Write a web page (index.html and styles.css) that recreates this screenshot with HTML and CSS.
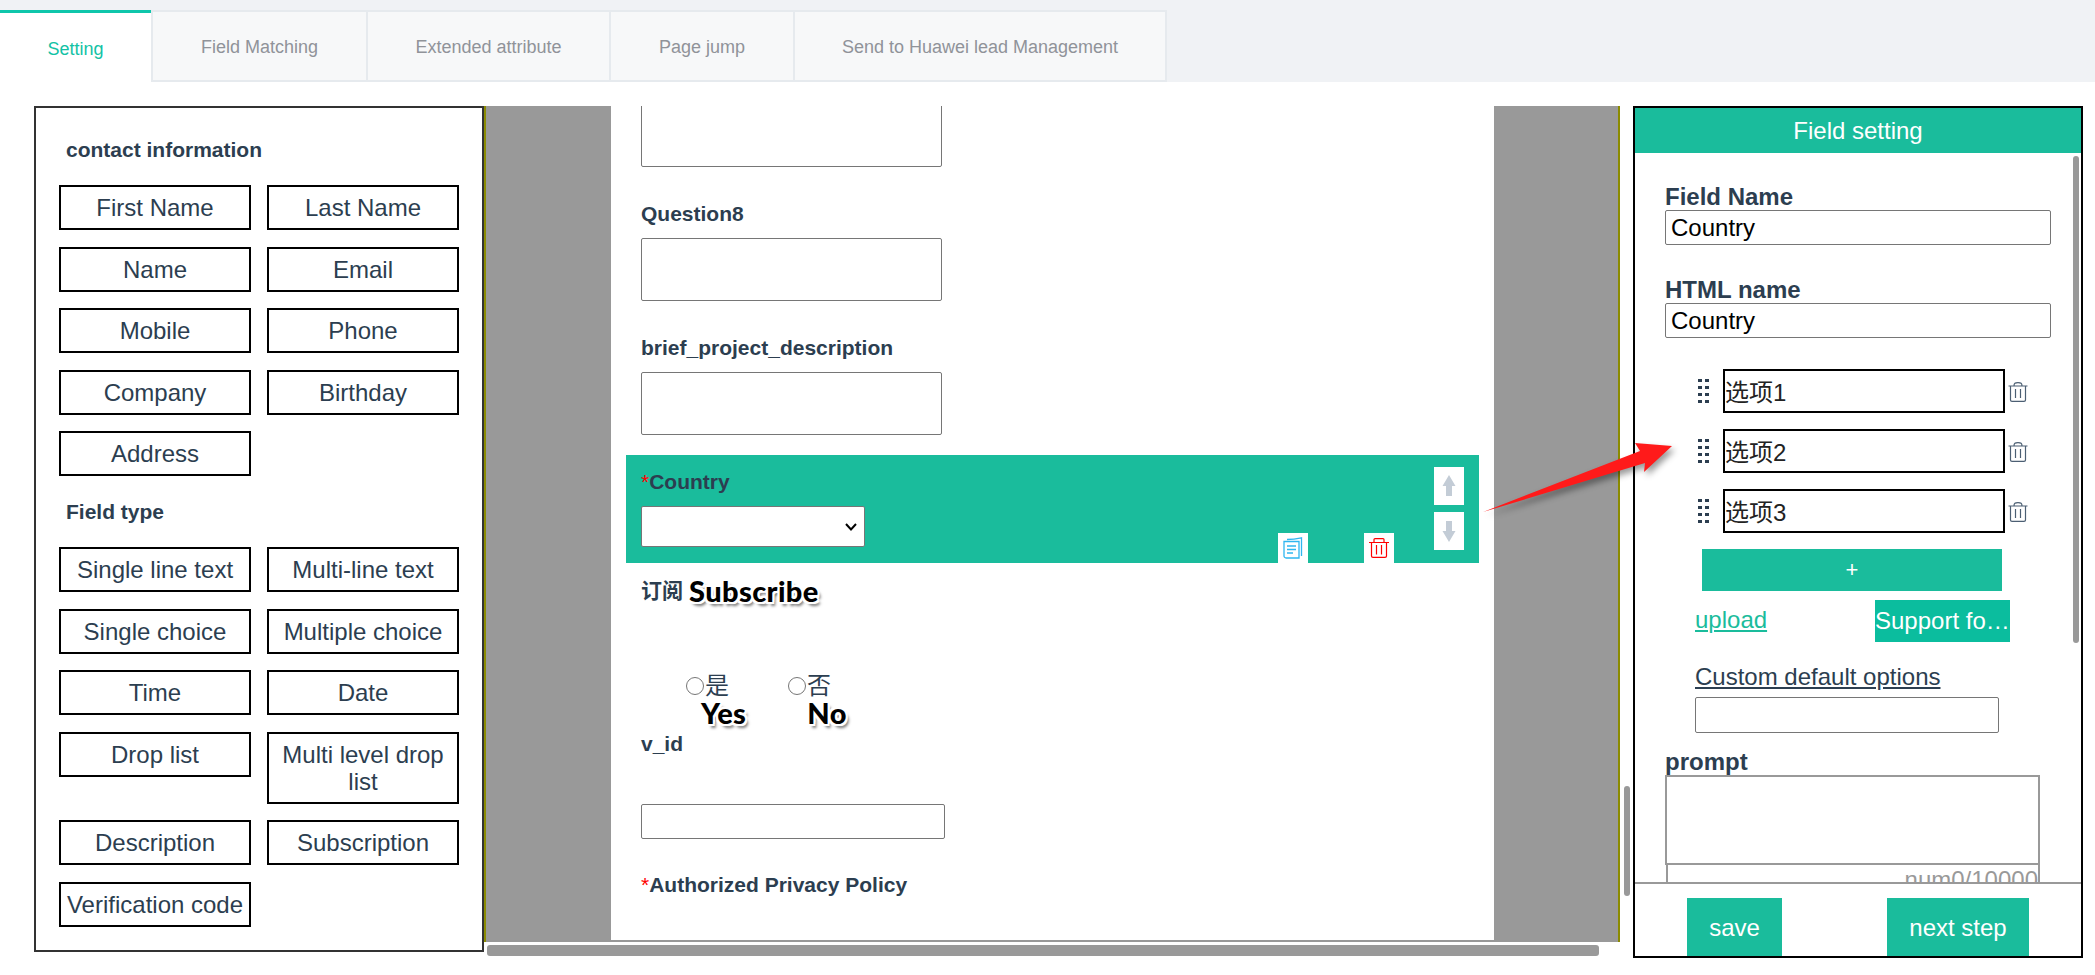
FILE: index.html
```html
<!DOCTYPE html>
<html lang="en">
<head>
    <meta charset="UTF-8">
    <title>Field setting</title>
    <link rel="stylesheet" href="styles.css">
</head>
<body>

    <div class="tabs">
        <div class="tab active">Setting</div>
        <div class="tab tab2">Field Matching</div>
        <div class="tab tab3">Extended attribute</div>
        <div class="tab tab4">Page jump</div>
        <div class="tab tab5">Send to Huawei lead Management</div>
    </div>

    <div class="main">
        <!-- left: field palette -->
        <div class="palette">
            <div class="palette-title first">contact information</div>
            <div class="btn-grid">
                <div class="pick">First Name</div>
                <div class="pick">Last Name</div>
                <div class="pick">Name</div>
                <div class="pick">Email</div>
                <div class="pick">Mobile</div>
                <div class="pick">Phone</div>
                <div class="pick">Company</div>
                <div class="pick">Birthday</div>
                <div class="pick">Address</div>
            </div>
            <div class="palette-title">Field type</div>
            <div class="btn-grid">
                <div class="pick">Single line text</div>
                <div class="pick">Multi-line text</div>
                <div class="pick">Single choice</div>
                <div class="pick">Multiple choice</div>
                <div class="pick">Time</div>
                <div class="pick">Date</div>
                <div class="pick">Drop list</div>
                <div class="pick">Multi level drop list</div>
                <div class="pick">Description</div>
                <div class="pick">Subscription</div>
                <div class="pick">Verification code</div>
            </div>
        </div>

        <!-- middle: form preview -->
        <div class="canvas-wrap">
            <div class="canvas">
                <div class="form">
                    <input class="box box-first" type="text">
                    <div class="field">
                        <label class="q-label">Question8</label>
                        <input class="box" type="text">
                    </div>
                    <div class="field">
                        <label class="q-label">brief_project_description</label>
                        <input class="box" type="text">
                    </div>
                    <div class="selected">
                        <label class="q-label"><span class="star">*</span>Country</label>
                        <select class="country"><option></option></select>
                        <svg class="chevron" width="12" height="8" viewBox="0 0 12 8" fill="none" stroke="#000" stroke-width="2"><path d="M1 1 L6 6.500 L11 1"/></svg>
                        <div class="tool tool-up">
                            <svg width="14" height="22" viewBox="0 0 14 22"><path d="M7 0 L13.500 11 H10 V21 H4 V11 H0.500 Z" fill="#c3ccd6"/></svg>
                        </div>
                        <div class="tool tool-down">
                            <svg width="14" height="22" viewBox="0 0 14 22"><path d="M7 22 L13.500 11 H10 V1 H4 V11 H0.500 Z" fill="#c3ccd6"/></svg>
                        </div>
                        <div class="tool tool-copy">
                            <svg width="20" height="22" viewBox="0 0 20 22" fill="none" stroke="#2fb6f0" stroke-width="1.300"><path d="M4 2.500 C8 2.500 13 2 18.500 0.800 V19"/><path d="M1 4.500 H16 V21 H3 C2 21 1 20 1 19 Z" fill="#fff"/><path d="M4 9 H13 M4 12.500 H13 M4 16 H10"/></svg>
                        </div>
                        <div class="tool tool-del">
                            <svg width="20" height="20" viewBox="0 0 20 20" fill="none" stroke="#f00" stroke-width="1.200"><path d="M0 4.500 H20 M5 4.500 V1.600 C5 1 5.500 0.600 6 0.600 H14 C14.500 0.600 15 1 15 1.600 V4.500 M2.500 4.500 V18 C2.500 19 3 19.400 4 19.400 H16 C17 19.400 17.500 19 17.500 18 V4.500 M7.500 7 V16.500 M12.500 7 V16.500"/></svg>
                        </div>
                    </div>
                    <div class="sub-line">
                        <label class="q-label inline">订阅</label>
                        <span class="note note-sub">Subscribe</span>
                    </div>
                    <div class="radios">
                        <label class="radio"><input type="radio" name="sub">是</label>
                        <label class="radio"><input type="radio" name="sub">否</label>
                    </div>
                    <div class="radio-notes">
                        <span class="note">Yes</span>
                        <span class="note">No</span>
                    </div>
                    <label class="q-label vid">v_id</label>
                    <input class="box box-vid" type="text">
                    <label class="q-label policy"><span class="star">*</span>Authorized Privacy Policy</label>
                </div>
            </div>
            <div class="hbar"></div>
            <div class="vbar"></div>
        </div>

        <!-- right: field settings -->
        <div class="settings">
            <div class="settings-head">Field setting</div>
            <div class="settings-body">
                <label class="s-label">Field Name</label>
                <input class="s-input" type="text" value="Country">
                <label class="s-label second">HTML name</label>
                <input class="s-input" type="text" value="Country">

                <div class="opt">
                    <svg class="drag" width="11" height="24" viewBox="0 0 11 24" fill="#2c3e50"><path d="M0 0h4v3H0zM7 0h4v3H7zM0 7h4v3H0zM7 7h4v3H7zM0 14h4v3H0zM7 14h4v3H7zM0 21h4v3H0zM7 21h4v3H7z"/></svg>
                    <input class="opt-input" type="text" value="选项1">
                    <svg class="bin" width="20" height="20" viewBox="0 0 20 20" fill="none" stroke="#4c5f73" stroke-width="1.200"><path d="M0.500 4 H19.500 M6 4 C6 1 7 0.600 10 0.600 C13 0.600 14 1 14 4 M2.500 4 V18 C2.500 19 3 19.400 4 19.400 H16 C17 19.400 17.500 19 17.500 18 V4 M7.500 7 V16 M12.500 7 V16"/></svg>
                </div>
                <div class="opt">
                    <svg class="drag" width="11" height="24" viewBox="0 0 11 24" fill="#2c3e50"><path d="M0 0h4v3H0zM7 0h4v3H7zM0 7h4v3H0zM7 7h4v3H7zM0 14h4v3H0zM7 14h4v3H7zM0 21h4v3H0zM7 21h4v3H7z"/></svg>
                    <input class="opt-input" type="text" value="选项2">
                    <svg class="bin" width="20" height="20" viewBox="0 0 20 20" fill="none" stroke="#4c5f73" stroke-width="1.200"><path d="M0.500 4 H19.500 M6 4 C6 1 7 0.600 10 0.600 C13 0.600 14 1 14 4 M2.500 4 V18 C2.500 19 3 19.400 4 19.400 H16 C17 19.400 17.500 19 17.500 18 V4 M7.500 7 V16 M12.500 7 V16"/></svg>
                </div>
                <div class="opt">
                    <svg class="drag" width="11" height="24" viewBox="0 0 11 24" fill="#2c3e50"><path d="M0 0h4v3H0zM7 0h4v3H7zM0 7h4v3H0zM7 7h4v3H7zM0 14h4v3H0zM7 14h4v3H7zM0 21h4v3H0zM7 21h4v3H7z"/></svg>
                    <input class="opt-input" type="text" value="选项3">
                    <svg class="bin" width="20" height="20" viewBox="0 0 20 20" fill="none" stroke="#4c5f73" stroke-width="1.200"><path d="M0.500 4 H19.500 M6 4 C6 1 7 0.600 10 0.600 C13 0.600 14 1 14 4 M2.500 4 V18 C2.500 19 3 19.400 4 19.400 H16 C17 19.400 17.500 19 17.500 18 V4 M7.500 7 V16 M12.500 7 V16"/></svg>
                </div>

                <div class="add-opt">+</div>
                <div class="upload-row">
                    <span class="upload">upload</span>
                    <span class="support">Support format</span>
                </div>
                <div class="custom">Custom default options</div>
                <input class="custom-input" type="text">
                <label class="s-label prompt">prompt</label>
                <div class="prompt-area"></div>
                <div class="prompt-count">num0/10000</div>
            </div>
            <div class="sbar"></div>
            <div class="settings-foot">
                <div class="foot-btn save">save</div>
                <div class="foot-btn next">next step</div>
            </div>
        </div>
    </div>

    <svg class="arrow" width="192" height="74" viewBox="0 0 192 74">
        <polygon points="0,69 157,8 152,0 189,3 161,29 162,20" fill="#ff1a1a"/>
    </svg>

</body>
</html>
```

FILE: styles.css
```css
* {
    box-sizing: border-box;
}

body {
    margin: 0;
    background-color: #fff;
    color: #2c3e50;
    font-family: "Liberation Sans", "Noto Sans CJK SC", sans-serif;
    position: relative;
    height: 975px;
    overflow: hidden;
}

/* tabs */
.tabs {
    display: flex;
    height: 82px;
    padding-top: 10px;
    background-color: #f0f2f5;
}

.tab {
    height: 72px;
    line-height: 70px;
    text-align: center;
    font-size: 18px;
    color: #909399;
    background-color: #f7f8f9;
    border: 2px solid #e6eaee;
    border-right: 0;
}

.tab.active {
    width: 151px;
    padding-top: 2px;
    line-height: 68px;
    color: #12c2a5;
    background-color: #fff;
    border: 0;
    border-top: 3px solid #0fc6ab;
}

.tab2 { width: 215px; }
.tab3 { width: 243px; }
.tab4 { width: 184px; }
.tab5 { width: 374px; border-right: 2px solid #e6eaee; }

.main {
    display: flex;
    align-items: flex-start;
    padding: 24px 0 0 34px;
}

/* left panel */
.palette {
    width: 450px;
    height: 846px;
    padding: 0 23px;
    border: 2px solid #333;
}

.palette-title {
    margin: 24px 0 23px 7px;
    font-size: 21px;
    line-height: 24px;
    font-weight: 700;
}

.palette-title.first {
    margin-top: 30px;
}

.btn-grid {
    display: grid;
    grid-template-columns: 192px 192px;
    column-gap: 16px;
    row-gap: 16.5px;
    align-items: start;
}

.pick {
    padding: 7px 4px;
    border: 2px solid #000;
    font-size: 24px;
    line-height: 27px;
    text-align: center;
}

/* middle */
.canvas-wrap {
    position: relative;
    width: 1136px;
    height: 846px;
}

.canvas {
    height: 836px;
    padding-left: 125px;
    overflow: hidden;
    background-color: #999;
    border-left: 2px solid #8b8b00;
    border-right: 2px solid #8b8b00;
}

.form {
    width: 883px;
    height: 836px;
    padding-left: 30px;
    background-color: #fff;
}

.box {
    display: block;
    width: 301px;
    height: 63px;
    background-color: #fff;
    border: 1px solid #767676;
    border-radius: 2px;
}

.box-first {
    margin-top: -2px;
}

.field {
    margin-top: 35px;
}

.q-label {
    display: block;
    height: 24px;
    margin-bottom: 12px;
    font-size: 21px;
    line-height: 24px;
    font-weight: 700;
}

.star {
    color: #f00;
    font-weight: 400;
}

.selected {
    position: relative;
    width: 853px;
    height: 108px;
    margin: 20px 0 0 -15px;
    padding: 15px 0 0 15px;
    background-color: #1abc9c;
}

.country {
    display: block;
    width: 224px;
    height: 41px;
    background-color: #fff;
    border: 1px solid #767676;
    border-radius: 2px;
    appearance: none;
}

.chevron {
    position: absolute;
    left: 219px;
    top: 68px;
}

.tool {
    position: absolute;
    display: flex;
    align-items: center;
    justify-content: center;
    width: 30px;
    background-color: #fff;
}

.tool-up { left: 808px; top: 12px; height: 38px; }
.tool-down { left: 808px; top: 57px; height: 38px; }
.tool-copy { left: 652px; top: 78px; height: 30px; }
.tool-del { left: 738px; top: 78px; height: 30px; }

.sub-line {
    display: flex;
    align-items: flex-start;
    height: 30px;
    margin-top: 13px;
    padding-top: 3px;
}

.q-label.inline {
    margin: 0 6px 0 0;
}

.note {
    color: #000;
    font-family: Lato, "Liberation Sans", sans-serif;
    font-size: 29px;
    font-weight: 900;
    letter-spacing: 0.4px;
    line-height: 28px;
    text-shadow: -2px 0 0 #fff, 2px 0 0 #fff, 0 -2px 0 #fff, 0 2px 0 #fff, -2px -2px 0 #fff, 2px -2px 0 #fff, -2px 2px 0 #fff, 2px 2px 0 #fff, 3px 4px 3px #777;
}

.note-sub {
    margin-top: -2px;
}

.radios {
    display: flex;
    gap: 59px;
    height: 27px;
    margin: 66px 0 0 45px;
    font-size: 24px;
    line-height: 27px;
}

.radio {
    display: flex;
    align-items: center;
}

.radio input {
    width: 18px;
    height: 18px;
    margin: 0 1px 0 0;
}

.radio-notes {
    display: flex;
    gap: 61px;
    height: 28px;
    margin-left: 60px;
}

.vid {
    margin: 5px 0 48px;
}

.box-vid {
    width: 304px;
    height: 35px;
}

.policy {
    margin-top: 34px;
}

.hbar {
    position: absolute;
    left: 3px;
    top: 839px;
    width: 1112px;
    height: 11px;
    background-color: #999;
    border-radius: 3px;
}

.vbar {
    position: absolute;
    left: 1140px;
    top: 680px;
    width: 6px;
    height: 110px;
    background-color: #999;
    border-radius: 3px;
}

/* right panel */
.settings {
    position: relative;
    display: flex;
    flex-direction: column;
    width: 450px;
    height: 852px;
    margin-left: 13px;
    border: 2px solid #000;
}

.settings-head {
    height: 45px;
    line-height: 45px;
    text-align: center;
    color: #fff;
    font-size: 24px;
    background-color: #1abc9c;
}

.settings-body {
    height: 729px;
    padding: 31px 0 0 30px;
    overflow: hidden;
}

.s-label {
    display: block;
    height: 26px;
    font-size: 24px;
    line-height: 26px;
    font-weight: 700;
}

.s-label.second {
    margin-top: 32px;
}

.s-input {
    display: block;
    width: 386px;
    height: 35px;
    padding: 0 5px;
    border: 1px solid #767676;
    border-radius: 2px;
    font-family: inherit;
    font-size: 24px;
    color: #000;
}

.opt {
    display: flex;
    align-items: center;
    height: 44px;
    margin: 16px 0 0 33px;
}

.s-input + .opt {
    margin-top: 31px;
}

.drag {
    margin-right: 14px;
}

.opt-input {
    width: 282px;
    height: 44px;
    padding: 0 0 2px;
    border: 2px solid #000;
    font-family: inherit;
    font-size: 24px;
    color: #222;
}

.bin {
    margin: 2px 0 0 3px;
}

.add-opt {
    width: 300px;
    height: 42px;
    margin: 16px 0 0 37px;
    line-height: 42px;
    text-align: center;
    color: #fff;
    font-size: 22px;
    background-color: #1abc9c;
}

.upload-row {
    display: flex;
    justify-content: space-between;
    align-items: flex-start;
    width: 315px;
    height: 42px;
    margin: 9px 0 0 30px;
    font-size: 24px;
}

.upload {
    margin-top: 6px;
    line-height: 27px;
    color: #1abc9c;
    text-decoration: underline;
}

.support {
    width: 135px;
    height: 42px;
    line-height: 42px;
    color: #fff;
    background-color: #0bbd9e;
    white-space: nowrap;
    overflow: hidden;
    text-overflow: ellipsis;
}

.custom {
    height: 26px;
    margin: 22px 0 7px 30px;
    font-size: 24px;
    line-height: 26px;
    text-decoration: underline;
}

.custom-input {
    display: block;
    width: 304px;
    height: 36px;
    margin-left: 30px;
    border: 1px solid #767676;
    border-radius: 2px;
}

.s-label.prompt {
    margin-top: 16px;
    height: 25px;
}

.prompt-area {
    width: 375px;
    height: 90px;
    margin-top: 1px;
    border: 2px solid #999;
}

.prompt-count {
    width: 374px;
    height: 40px;
    margin: -2px 0 0 1px;
    padding: 1px 0 0 0;
    border: 2px solid #999;
    color: #999;
    font-size: 24px;
    line-height: 27px;
    text-align: right;
}

.sbar {
    position: absolute;
    left: 438px;
    top: 48px;
    width: 6px;
    height: 487px;
    background-color: #999;
    border-radius: 3px;
}

.settings-foot {
    display: flex;
    height: 74px;
    padding: 14px 0 0 52px;
    border-top: 2px solid #999;
}

.foot-btn {
    height: 58px;
    line-height: 60px;
    text-align: center;
    color: #fff;
    font-size: 24px;
    background-color: #1abc9c;
}

.save { width: 95px; }
.next { width: 142px; margin-left: 105px; }

/* annotation drawn on top of the page */
.arrow {
    position: absolute;
    left: 1483px;
    top: 443px;
    filter: drop-shadow(3px 4px 3px rgba(0, 0, 0, 0.4));
}
```
